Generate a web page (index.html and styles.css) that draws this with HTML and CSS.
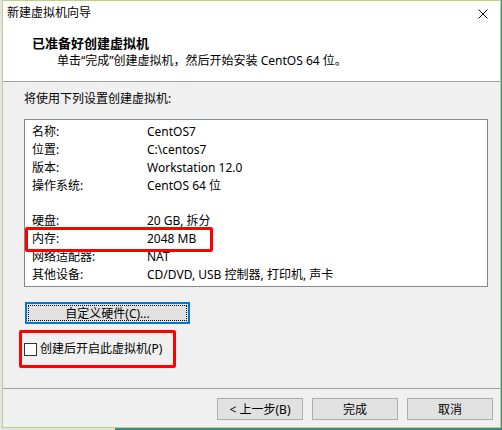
FILE: index.html
```html
<!DOCTYPE html>
<html lang="zh-CN">
<head>
<meta charset="UTF-8">
<title>新建虚拟机向导</title>
<link rel="stylesheet" href="styles.css">
</head>
<body>
<div class="dialog">
  <div class="titlebar">
    <span class="title">新建虚拟机向导</span>
    <svg class="close" width="10" height="10" viewBox="0 0 10 10">
      <path d="M0.5 0.5 L9.5 9.5 M9.5 0.5 L0.5 9.5" stroke="#000" stroke-width="1"/>
    </svg>
  </div>
  <div class="header">
    <div class="heading">已准备好创建虚拟机</div>
    <div class="subtitle">单击“完成”创建虚拟机，然后开始安装 CentOS 64 位。</div>
  </div>
  <div class="content">
    <div class="intro">将使用下列设置创建虚拟机:</div>
    <div class="summary">
      <div class="row"><span class="key">名称:</span><span>CentOS7</span></div>
      <div class="row"><span class="key">位置:</span><span>C:\centos7</span></div>
      <div class="row"><span class="key">版本:</span><span>Workstation 12.0</span></div>
      <div class="row"><span class="key">操作系统:</span><span>CentOS 64 位</span></div>
      <div class="spacer"></div>
      <div class="row"><span class="key">硬盘:</span><span>20 GB, 拆分</span></div>
      <div class="row"><span class="key">内存:</span><span>2048 MB</span></div>
      <div class="row"><span class="key">网络适配器:</span><span>NAT</span></div>
      <div class="row"><span class="key">其他设备:</span><span>CD/DVD, USB 控制器, 打印机, 声卡</span></div>
    </div>
    <button class="btn btn-focus">自定义硬件(C)...</button>
    <label class="check"><span class="box"></span>创建后开启此虚拟机(P)</label>
  </div>
  <div class="footer">
    <button class="btn">&lt; 上一步(B)</button>
    <button class="btn">完成</button>
    <button class="btn">取消</button>
  </div>
  <div class="mark mark-memory"></div>
  <div class="mark mark-check"></div>
</div>
</body>
</html>
```

FILE: styles.css
```css
body {
  margin: 0;
  width: 502px;
  height: 430px;
  overflow: hidden;
  background: linear-gradient(to right, #e4e4e4 0, #e4e4e4 115px, #3a8796 115px);
  font-family: "Noto Sans", "Noto Sans CJK SC", sans-serif;
  font-size: 12px;
  color: #000;
}
.dialog {
  position: relative;
  margin-left: 2px;
  width: 499px;
  height: 428px;
  box-sizing: border-box;
  border: 1px solid #b8d57a;
  background-color: #f0f0f0;
  display: flex;
  flex-direction: column;
}
.titlebar {
  height: 24px;
  background-color: #fff;
  display: flex;
  align-items: center;
  justify-content: space-between;
  padding: 0 12px 0 4px;
  line-height: 16px;
}
.close {
  margin-top: 1px;
}
.header {
  background-color: #fff;
  border-bottom: 1px solid #a0a0a0;
  padding-top: 10px;
  height: 46px;
}
.heading {
  font-size: 13px;
  font-weight: bold;
  line-height: 16px;
  padding-left: 29px;
}
.subtitle {
  line-height: 16px;
  margin-top: 2px;
  padding-left: 54px;
}
.content {
  padding: 9px 0 0 21px;
  flex: 1;
}
.intro {
  line-height: 16px;
}
.summary {
  margin-top: 12px;
  width: 464px;
  height: 168px;
  box-sizing: border-box;
  border: 1px solid #828790;
  background-color: #fff;
  padding: 3px 0 0 7px;
}
.row {
  display: flex;
  line-height: 18px;
  height: 18px;
}
.key {
  width: 115px;
}
.spacer {
  height: 17px;
}
.btn {
  font-family: inherit;
  font-size: 12px;
  height: 22px;
  width: 86px;
  padding: 0;
  border: 1px solid #adadad;
  background-color: #e1e1e1;
  color: #000;
}
.btn-focus {
  display: block;
  margin: 15px 0 0 1px;
  width: 165px;
  border-color: #0078d7;
  box-shadow: inset 0 0 0 1px #0078d7;
  outline: 1px dotted #000;
  outline-offset: -4px;
}
.check {
  display: flex;
  align-items: center;
  margin-top: 17px;
  line-height: 16px;
}
.box {
  width: 13px;
  height: 13px;
  box-sizing: border-box;
  border: 1px solid #333;
  background-color: #fff;
  margin-right: 3px;
}
.footer {
  border-top: 1px solid #a0a0a0;
  padding: 9px 7px 7px 0;
  display: flex;
  justify-content: flex-end;
  gap: 9px;
}
.mark {
  position: absolute;
  box-sizing: border-box;
  border: 3px solid #f00;
  border-radius: 2px;
}
.mark-memory {
  left: 22px;
  top: 226px;
  width: 188px;
  height: 25px;
}
.mark-check {
  left: 16px;
  top: 329px;
  width: 157px;
  height: 38px;
}
```
